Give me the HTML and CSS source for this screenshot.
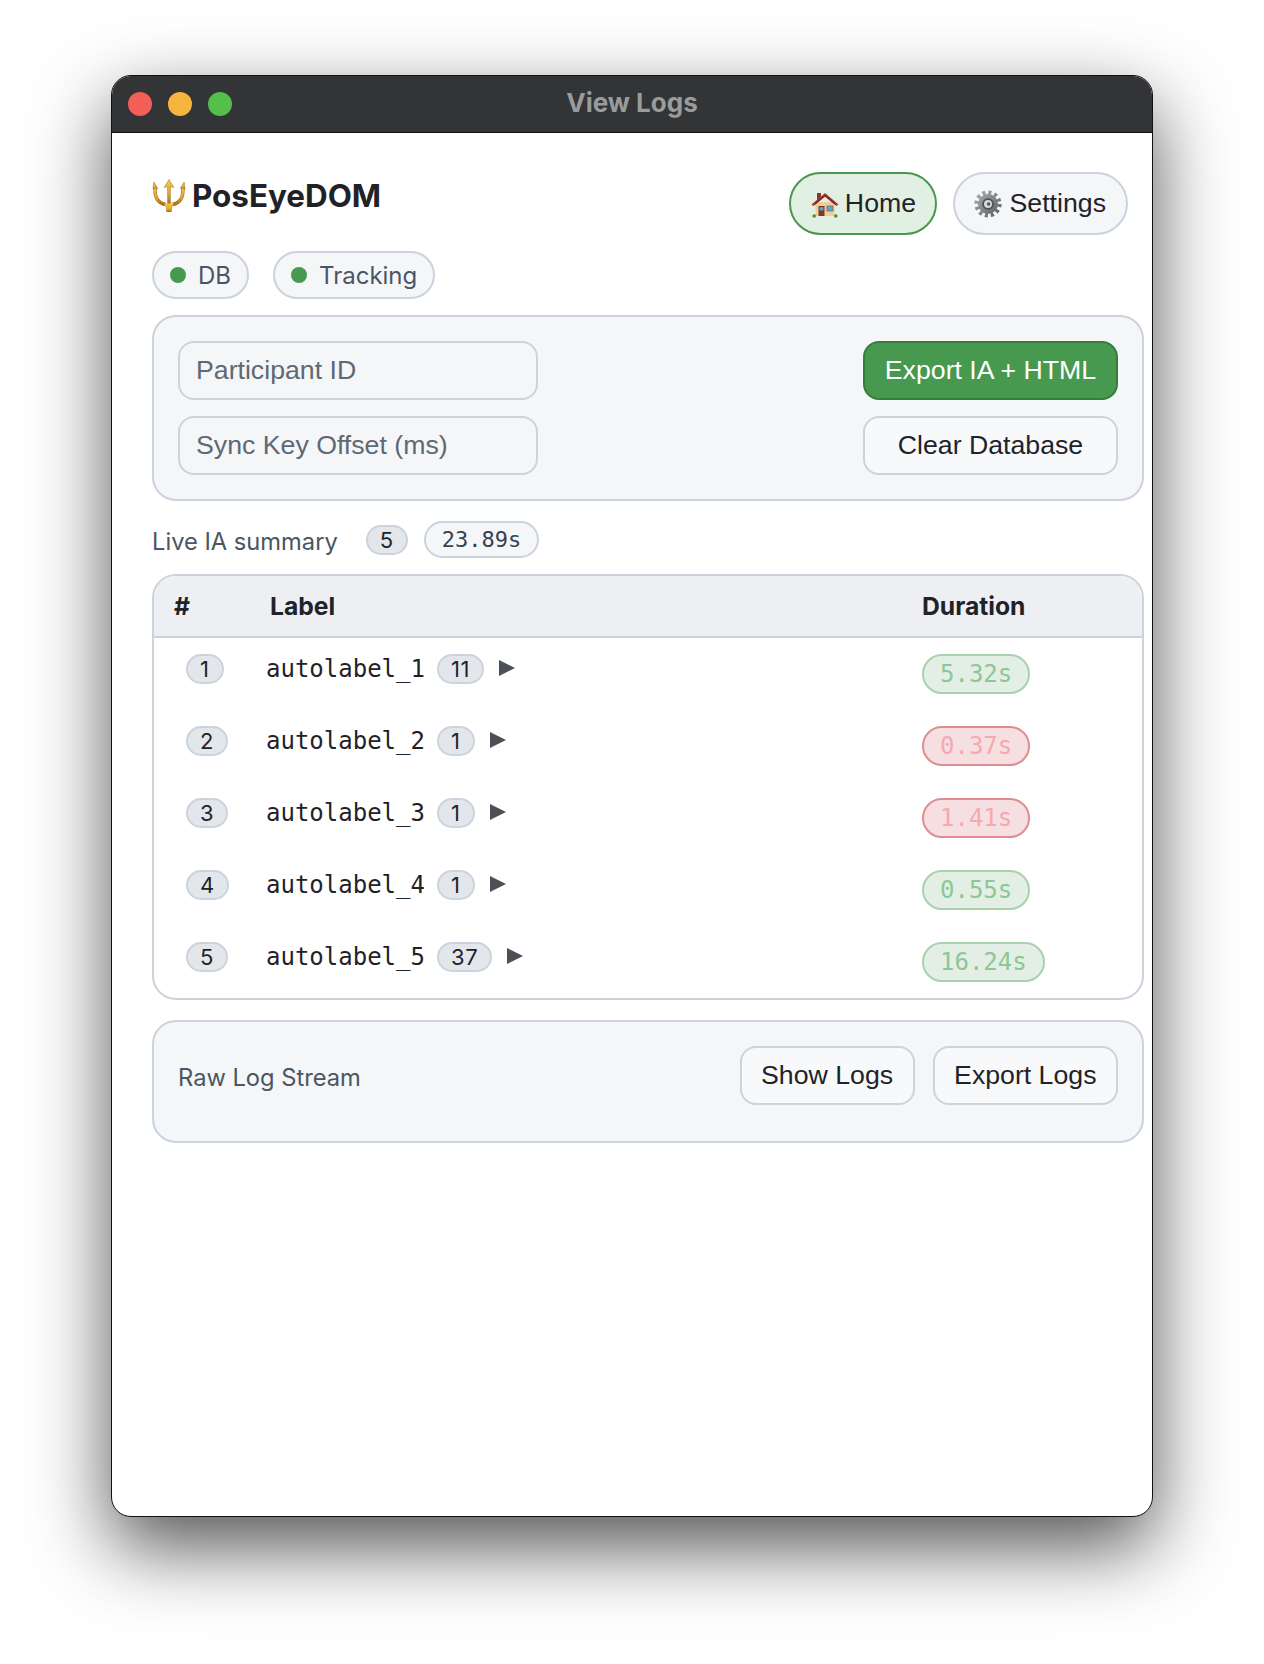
FILE: index.html
```html
<!DOCTYPE html>
<html lang="en">
<head>
    <meta charset="UTF-8">
    <meta name="viewport" content="width=device-width, initial-scale=1.0">
    <title>View Logs</title>
    <link rel="stylesheet" href="styles.css">
</head>
<body>
    <div class="window">
        <div class="titlebar">
            <div class="lights">
                <span class="light red"></span>
                <span class="light yellow"></span>
                <span class="light green"></span>
            </div>
            <div class="window-title">View Logs</div>
        </div>

        <div class="content">
            <div class="topbar">
                <div class="brand">
                    <svg class="trident" viewBox="0 0 34 34" aria-hidden="true">
                        <defs>
                            <linearGradient id="gold" x1="0" y1="0" x2="0" y2="1">
                                <stop offset="0" stop-color="#f3c94e"/>
                                <stop offset="0.6" stop-color="#e5a92e"/>
                                <stop offset="1" stop-color="#a86f18"/>
                            </linearGradient>
                        </defs>
                        <path d="M3.4 9 C2 19 7 25 14 25.5 M30.6 9 C32 19 27 25 20 25.5" fill="none" stroke="#9c6a1a" stroke-width="3.4"/>
                        <path d="M3.4 9 C2 19 7 25 14 25.5 M30.6 9 C32 19 27 25 20 25.5" fill="none" stroke="url(#gold)" stroke-width="2.2"/>
                        <path d="M1.8 3 L5.8 9.5 L3.4 8.8 L1 10.5 Z M32.2 3 L33 10.5 L30.6 8.8 L28.2 9.5 Z" fill="url(#gold)" stroke="#9c6a1a" stroke-width=".5"/>
                        <path d="M17 .5 L21.8 8.5 L18.4 7.6 L18.4 25 L15.6 25 L15.6 7.6 L12.2 8.5 Z" fill="url(#gold)" stroke="#9c6a1a" stroke-width=".5"/>
                        <path d="M12 24.5 H22 L20.2 28.5 L19.6 33 H14.4 L13.8 28.5 Z" fill="url(#gold)"/>
                    </svg>
                    <span>PosEyeDOM</span>
                </div>
                <div class="nav">
                    <button class="nav-btn active">
                        <svg class="emoji" viewBox="0 0 28 28" aria-hidden="true">
                            <rect x="6" y="3" width="4" height="7" fill="#8f3328"/>
                            <rect x="4.5" y="12" width="19" height="14" fill="#eccf9f"/>
                            <path d="M14 3 L27.5 14.5 L25.5 16 L14 6.5 L2.5 16 L.5 14.5 Z" fill="#a8392b"/>
                            <path d="M14 6.5 L24 14.7 V12.8 L14 4.8 L4 12.8 V14.7 Z" fill="#7a2a20"/>
                            <rect x="7.5" y="16" width="6" height="10" fill="#7b3b22"/>
                            <rect x="8.6" y="17.2" width="3.8" height="3.2" fill="#5da3d6"/>
                            <rect x="16" y="16" width="6" height="5" fill="#5da3d6" stroke="#8a6b48" stroke-width=".8"/>
                            <circle cx="3.2" cy="26" r="1.8" fill="#5d8a2e"/>
                            <circle cx="24.8" cy="26" r="1.8" fill="#5d8a2e"/>
                        </svg>
                        <span>Home</span>
                    </button>
                    <button class="nav-btn settings">
                        <svg class="emoji" viewBox="0 0 28 28" aria-hidden="true">
                            <defs>
                                <linearGradient id="steel" x1="0" y1="0" x2="1" y2="1">
                                    <stop offset="0" stop-color="#a4a7ac"/>
                                    <stop offset="1" stop-color="#5f6268"/>
                                </linearGradient>
                            </defs>
                            <circle cx="14" cy="14" r="11.4" fill="none" stroke="url(#steel)" stroke-width="4.4" stroke-dasharray="3 2.97"/>
                            <circle cx="14" cy="14" r="10" fill="url(#steel)"/>
                            <circle cx="14" cy="14" r="5.8" fill="#4d5056"/>
                            <circle cx="14" cy="14" r="4" fill="#d6d8da"/>
                            <circle cx="14.6" cy="14" r="1.8" fill="#55585e"/>
                        </svg>
                        <span>Settings</span>
                    </button>
                </div>
            </div>

            <div class="status-row">
                <div class="status"><span class="dot"></span>DB</div>
                <div class="status"><span class="dot"></span>Tracking</div>
            </div>

            <div class="panel export-panel">
                <div class="fields">
                    <input type="text" placeholder="Participant ID">
                    <input type="text" placeholder="Sync Key Offset (ms)">
                </div>
                <div class="actions">
                    <button class="btn primary">Export IA + HTML</button>
                    <button class="btn">Clear Database</button>
                </div>
            </div>

            <div class="summary">
                <span class="summary-label">Live IA summary</span>
                <span class="pill">5</span>
                <span class="total">23.89s</span>
            </div>

            <div class="table-wrap">
                <table>
                    <colgroup>
                        <col class="col-num">
                        <col>
                        <col class="col-duration">
                    </colgroup>
                    <thead>
                        <tr>
                            <th class="th-num">#</th>
                            <th class="th-label">Label</th>
                            <th>Duration</th>
                        </tr>
                    </thead>
                    <tbody>
                        <tr>
                            <td class="td-num"><span class="pill">1</span></td>
                            <td><div class="label-cell"><span class="mono">autolabel_1</span><span class="pill">11</span><span class="arrow"></span></div></td>
                            <td><span class="duration ok">5.32s</span></td>
                        </tr>
                        <tr>
                            <td class="td-num"><span class="pill">2</span></td>
                            <td><div class="label-cell"><span class="mono">autolabel_2</span><span class="pill">1</span><span class="arrow"></span></div></td>
                            <td><span class="duration bad">0.37s</span></td>
                        </tr>
                        <tr>
                            <td class="td-num"><span class="pill">3</span></td>
                            <td><div class="label-cell"><span class="mono">autolabel_3</span><span class="pill">1</span><span class="arrow"></span></div></td>
                            <td><span class="duration bad">1.41s</span></td>
                        </tr>
                        <tr>
                            <td class="td-num"><span class="pill">4</span></td>
                            <td><div class="label-cell"><span class="mono">autolabel_4</span><span class="pill">1</span><span class="arrow"></span></div></td>
                            <td><span class="duration ok">0.55s</span></td>
                        </tr>
                        <tr>
                            <td class="td-num"><span class="pill">5</span></td>
                            <td><div class="label-cell"><span class="mono">autolabel_5</span><span class="pill">37</span><span class="arrow"></span></div></td>
                            <td><span class="duration ok">16.24s</span></td>
                        </tr>
                    </tbody>
                </table>
            </div>

            <div class="panel log-panel">
                <span class="log-label">Raw Log Stream</span>
                <div class="log-actions">
                    <button class="btn small">Show Logs</button>
                    <button class="btn small">Export Logs</button>
                </div>
            </div>
        </div>
    </div>
</body>
</html>
```

FILE: styles.css
```css
* {
    box-sizing: border-box;
}
body {
    margin: 0;
    height: 1664px;
    padding: 75px 0 0 111px;
    background: #fff;
    font-family: "Liberation Sans", Arial, sans-serif;
    color: #1f2328;
    overflow: hidden;
}
.window {
    width: 1042px;
    height: 1442px;
    background: #fff;
    border: 1px solid #111;
    border-radius: 20px;
    overflow: hidden;
    box-shadow: 0 30px 78px rgba(0, 0, 0, 0.68);
}
.titlebar {
    position: relative;
    height: 57px;
    background: #333436;
    border-bottom: 1px solid #111;
}
.lights {
    display: flex;
    gap: 16px;
    padding: 16px 0 0 16px;
}
.light {
    width: 24px;
    height: 24px;
    border-radius: 50%;
}
.red { background: #f15f56; }
.yellow { background: #f5b53f; }
.green { background: #54bf4a; }
.window-title {
    position: absolute;
    top: 0;
    left: 0;
    right: 0;
    text-align: center;
    line-height: 54px;
    font-family: Inter, sans-serif;
    font-size: 26px;
    font-weight: 700;
    color: #9a9b9d;
}
.content {
    padding: 39px 8px 0 40px;
}
.topbar {
    display: flex;
    justify-content: space-between;
    align-items: flex-start;
    padding-right: 16px;
}
.brand {
    display: flex;
    align-items: center;
    gap: 6px;
    font-family: Inter, sans-serif;
    font-size: 31.4px;
    font-weight: 700;
    line-height: 48px;
}
.trident {
    width: 34px;
    height: 34px;
}
.nav {
    display: flex;
    gap: 16px;
}
.nav-btn {
    display: flex;
    align-items: center;
    gap: 6px;
    height: 63px;
    padding: 0 20px;
    border: 2px solid #cbd3dd;
    border-radius: 32px;
    background: #f4f6f8;
    font-family: "Liberation Sans", Arial, sans-serif;
    font-size: 26.7px;
    color: #1f2328;
}
.nav-btn.active {
    padding-right: 18.5px;
    background: #e2efe3;
    border-color: #47994f;
}
.nav-btn.settings {
    padding-left: 19px;
    padding-right: 20px;
    gap: 8px;
}
.emoji {
    width: 28px;
    height: 28px;
}
.status-row {
    display: flex;
    gap: 24px;
    margin-top: 16px;
}
.status {
    display: flex;
    align-items: center;
    gap: 12px;
    height: 48px;
    padding: 0 16px;
    border: 2px solid #cbd3dd;
    border-radius: 24px;
    background: #f4f6f8;
    font-family: Inter, sans-serif;
    font-size: 24px;
    color: #4b5563;
}
.dot {
    width: 16px;
    height: 16px;
    border-radius: 50%;
    background: #47994f;
}
.panel {
    border: 2px solid #cbd3dd;
    border-radius: 24px;
    background: #f4f6f8;
}
.export-panel {
    display: flex;
    justify-content: space-between;
    height: 186px;
    margin-top: 16px;
    padding: 24px;
}
.fields, .actions {
    display: flex;
    flex-direction: column;
    gap: 16px;
}
input {
    width: 360px;
    height: 59px;
    padding: 0 16px;
    border: 2px solid #cbd3dd;
    border-radius: 16px;
    background: #f4f6f8;
    font-family: "Liberation Sans", Arial, sans-serif;
    font-size: 26.7px;
}
input::placeholder {
    color: #5f6873;
    opacity: 1;
}
.btn {
    height: 59px;
    padding: 0 19.5px;
    border: 2px solid #cbd3dd;
    border-radius: 16px;
    background: #f8f9fa;
    font-family: "Liberation Sans", Arial, sans-serif;
    font-size: 26.7px;
    color: #1f2328;
    white-space: nowrap;
}
.actions .btn {
    width: 255px;
    padding: 0;
}
.btn.primary {
    background: #47994f;
    border-color: #367c3d;
    color: #fff;
}
.summary {
    display: flex;
    align-items: center;
    height: 37px;
    margin-top: 20px;
    font-family: Inter, sans-serif;
    font-size: 23.7px;
    color: #4b5563;
}
.summary-label {
    margin-right: 28px;
    padding-top: 3px;
}
.pill {
    display: inline-flex;
    align-items: center;
    justify-content: center;
    height: 30px;
    padding: 0 12px;
    border: 2px solid #cbd3dd;
    border-radius: 15px;
    background: #e3e7ec;
    font-family: Inter, sans-serif;
    font-size: 22px;
    letter-spacing: 0.6px;
    color: #1f2328;
}
.total {
    display: inline-flex;
    align-items: center;
    height: 37px;
    margin-left: 16px;
    padding: 0 16px;
    border: 2px solid #cbd3dd;
    border-radius: 19px;
    background: #f4f6f8;
    font-family: "DejaVu Sans Mono", monospace;
    font-size: 22px;
    color: #374151;
}
.table-wrap {
    margin-top: 16px;
    border: 2px solid #cbd3dd;
    border-radius: 24px;
    overflow: hidden;
}
table {
    width: 100%;
    table-layout: fixed;
    border-collapse: collapse;
}
.col-num { width: 112px; }
.col-duration { width: 220px; }
th {
    height: 61px;
    padding: 0;
    background: #edeff3;
    border-bottom: 2px solid #cbd3dd;
    text-align: left;
    font-family: Inter, sans-serif;
    font-size: 24.7px;
    font-weight: 700;
}
.th-num { padding-left: 20px; }
.th-label { padding-left: 4px; }
td {
    height: 72px;
    padding: 16px 0;
    vertical-align: top;
}
.td-num { padding-left: 32px; }
.label-cell {
    display: flex;
    align-items: center;
    gap: 12px;
    height: 30px;
}
.mono {
    font-family: "DejaVu Sans Mono", monospace;
    font-size: 24px;
    color: #1f2328;
}
.arrow {
    width: 0;
    height: 0;
    margin: -2px 0 0 3px;
    border-left: 16px solid #4b5056;
    border-top: 8px solid transparent;
    border-bottom: 8px solid transparent;
}
.duration {
    display: inline-flex;
    align-items: center;
    height: 40px;
    padding: 0 16px;
    border: 2px solid;
    border-radius: 20px;
    font-family: "DejaVu Sans Mono", monospace;
    font-size: 24px;
}
.ok {
    background: #e3efe4;
    border-color: #a9d2ac;
    color: #8cc796;
}
.bad {
    background: #f6dfe1;
    border-color: #df8d8d;
    color: #f5a9ae;
}
.log-panel {
    display: flex;
    justify-content: space-between;
    align-items: flex-start;
    height: 123px;
    margin-top: 20px;
    padding: 24px;
}
.log-label {
    margin-top: 17px;
    font-family: Inter, sans-serif;
    font-size: 23.7px;
    color: #4b5563;
}
.log-actions {
    display: flex;
    gap: 18px;
}
```
